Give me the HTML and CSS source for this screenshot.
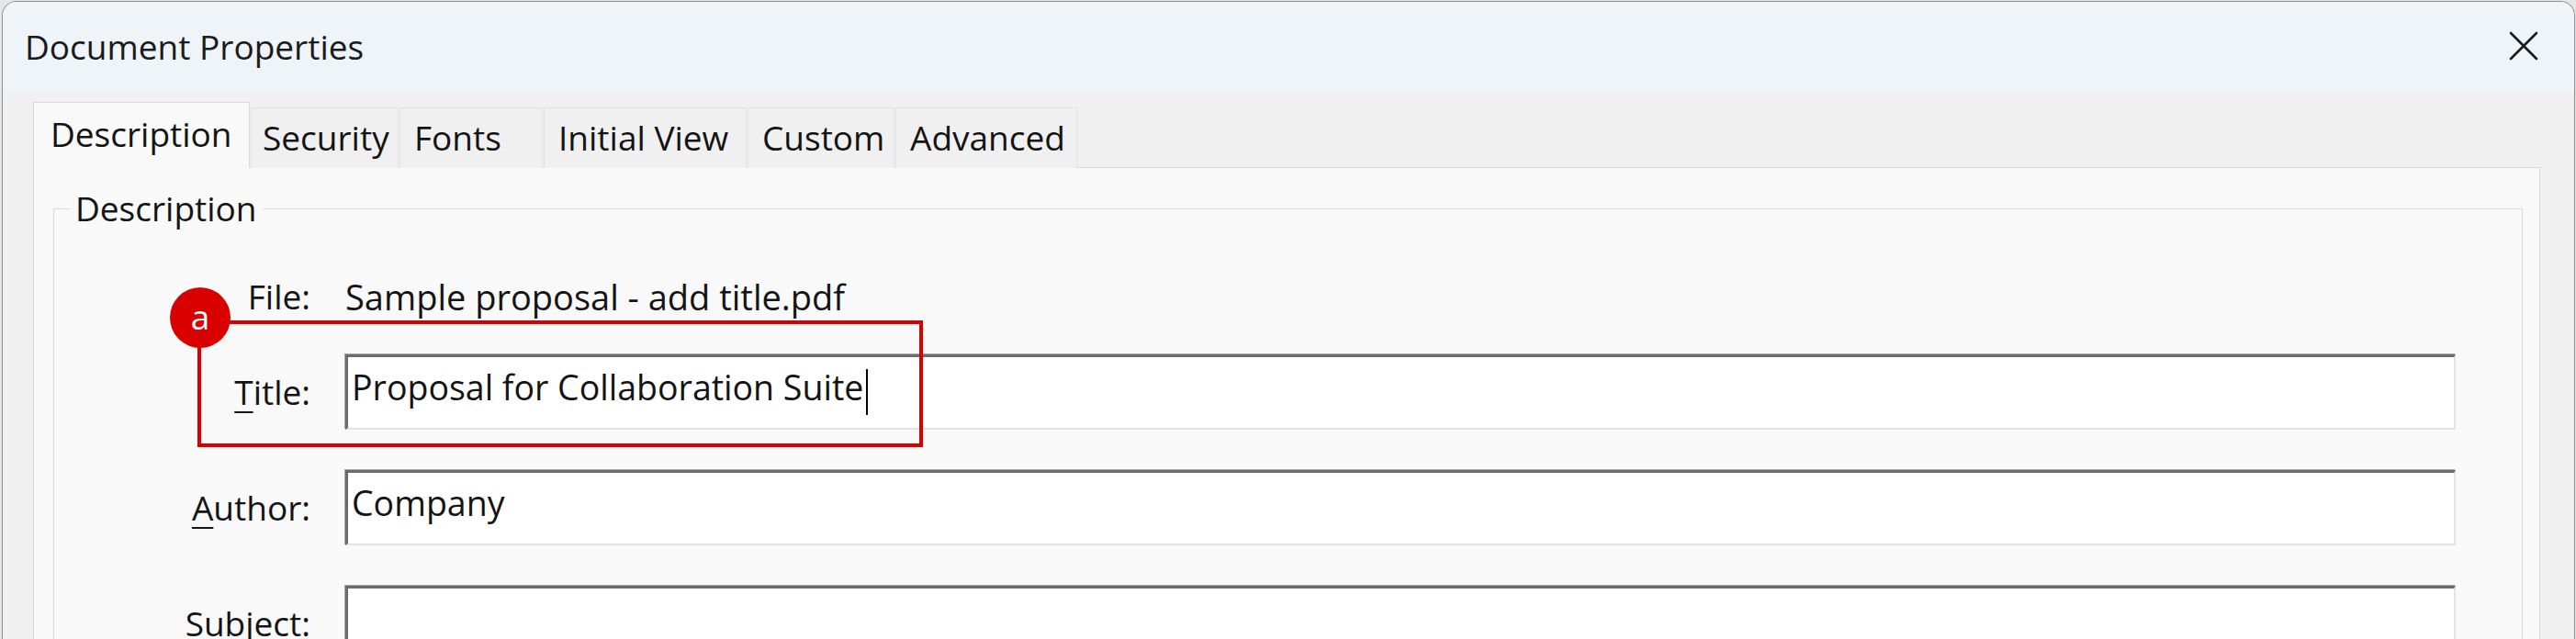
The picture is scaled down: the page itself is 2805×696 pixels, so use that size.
FILE: index.html
```html
<!DOCTYPE html>
<html lang="en">
<head>
<meta charset="utf-8">
<title>Document Properties</title>
<link rel="stylesheet" href="styles.css">
</head>
<body>
<div class="window">
  <div class="titlebar">
    <span class="title">Document Properties</span>
    <svg class="close" width="32" height="32" viewBox="0 0 32 32" aria-label="Close">
      <path d="M2 2 L30 30 M30 2 L2 30" stroke="#1b1b1b" stroke-width="2.6" stroke-linecap="round" fill="none"/>
    </svg>
  </div>
  <div class="content">
    <div class="tabs">
      <div class="tab active tab-desc">Description</div>
      <div class="tab tab-sec">Security</div>
      <div class="tab tab-fonts">Fonts</div>
      <div class="tab tab-view">Initial View</div>
      <div class="tab tab-custom">Custom</div>
      <div class="tab tab-adv">Advanced</div>
    </div>
    <div class="panel">
      <fieldset class="group">
        <legend>Description</legend>
        <div class="form">
          <div class="label">File:</div>
          <div class="value">Sample proposal - add title.pdf</div>

          <label class="label"><u>T</u>itle:</label>
          <div class="input">Proposal for Collaboration Suite<span class="caret"></span></div>

          <label class="label"><u>A</u>uthor:</label>
          <div class="input">Company</div>

          <label class="label">Subject:</label>
          <div class="input"></div>
        </div>
      </fieldset>
    </div>
  </div>
  <div class="callout"><span class="badge">a</span></div>
</div>
</body>
</html>
```
FILE: styles.css
```css
* { box-sizing: border-box; }

html, body {
  margin: 0;
  padding: 0;
  background: #e6e6e6;
  height: 696px;
  overflow: hidden;
}

body {
  font-family: "Open Sans", "Noto Sans", "Liberation Sans", sans-serif;
  font-size: 37px;
  color: #141414;
}

.window {
  position: relative;
  margin: 1px 1px 0 2px;
  height: 700px;
  border: 1px solid #8e8e8e;
  border-bottom: none;
  border-radius: 16px 16px 0 0;
  background: #f0f0f0;
  overflow: hidden;
}

.titlebar {
  height: 98px;
  background: #eff4f9;
  display: flex;
  align-items: center;
  justify-content: space-between;
  padding: 0 39px 0 24px;
}

.title {
  line-height: 50px;
  color: #1b1b1b;
}

.close {
  display: block;
  margin-bottom: 3px;
}

.content {
  padding-top: 11px;
}

.tabs {
  display: flex;
  align-items: flex-end;
  gap: 1px;
  height: 72px;
  margin: 0 0 -1px 33px;
}

.tab {
  height: 66px;
  display: flex;
  align-items: center;
  padding: 0 0 2px 15px;
  background: #f0f0f0;
  border: 1px solid #e3e3e3;
  border-bottom: none;
  white-space: nowrap;
}

.tab.active {
  position: relative;
  z-index: 1;
  height: 72px;
  padding: 0 0 4px 18px;
  background: #f9f9f9;
  border-color: #d9d9d9;
}

.tab-desc { width: 236px; }
.tab-sec { width: 161px; padding-left: 12px; }
.tab-fonts { width: 156px; }
.tab-view { width: 221px; }
.tab-custom { width: 160px; }
.tab-adv { width: 198px; }

.panel {
  margin: 0 37px 0 33px;
  height: 520px;
  background: #f9f9f9;
  border: 1px solid #d9d9d9;
  padding-top: 22px;
}

.group {
  margin: 0 18px 0 21px;
  padding: 55px 72px 0 0;
  border: 1px solid #dcdcdc;
  min-width: 0;
}

.group legend {
  margin-left: 17px;
  padding: 0 6px;
  line-height: 44px;
}

.form {
  display: grid;
  grid-template-columns: 279px 1fr;
  column-gap: 38px;
  row-gap: 44px;
}

.label {
  text-align: right;
  align-self: center;
  line-height: 38px;
}

.label u {
  text-decoration-thickness: 2px;
  text-underline-offset: 7px;
}

.value {
  font-size: 38px;
  line-height: 38px;
  white-space: nowrap;
}

.input {
  height: 82px;
  background: #ffffff;
  border-top: 3px solid #6b6b6b;
  border-left: 3px solid #6b6b6b;
  border-right: 2px solid #e3e3e3;
  border-bottom: 2px solid #e3e3e3;
  box-shadow: -1px -1px 0 #a8a8a8;
  padding: 8px 0 0 4px;
  font-size: 37.5px;
  line-height: 50px;
  white-space: nowrap;
}

.caret {
  display: inline-block;
  width: 2px;
  height: 50px;
  margin-left: 3px;
  background: #000;
  vertical-align: -16px;
}

.callout {
  position: absolute;
  left: 212px;
  top: 347px;
  width: 790px;
  height: 138px;
  border: 4px solid #d90000;
  z-index: 5;
}

.badge {
  position: absolute;
  left: -34px;
  top: -40px;
  width: 66px;
  height: 66px;
  border-radius: 50%;
  background: #d90000;
  color: #ffffff;
  display: flex;
  align-items: center;
  justify-content: center;
  font-size: 37px;
  line-height: 1;
  padding-bottom: 4px;
}
```
